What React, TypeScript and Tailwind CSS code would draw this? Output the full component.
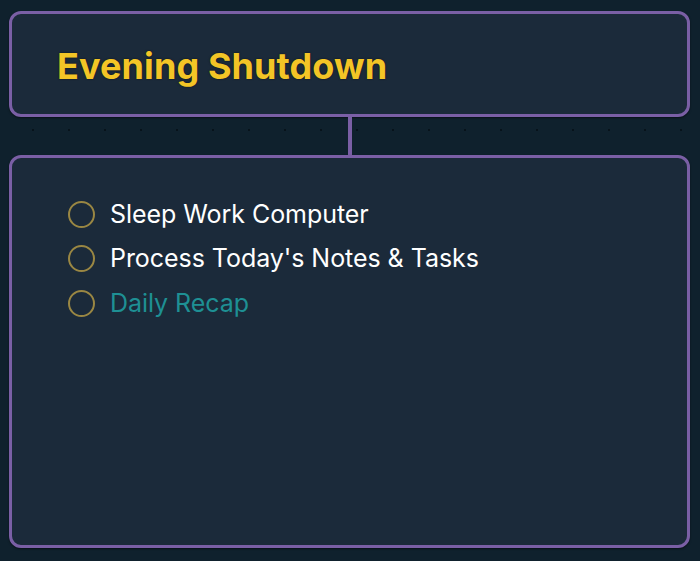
import React from "react";

const items = [
  { label: "Sleep Work Computer", color: "text-white" },
  { label: "Process Today's Notes & Tasks", color: "text-white" },
  { label: "Daily Recap", color: "text-[#1e9094]" },
];

export default function App() {
  return (
    <div
      className="w-[700px] h-[561px] bg-[#0f212d] bg-[radial-gradient(circle,#07131b_1px,transparent_1.5px)] bg-[length:36px_36px] bg-[position:15px_4px] pt-[11px] pl-[9px] pr-[10px] flex flex-col"
      style={{ fontFamily: "Inter, 'Noto Sans', sans-serif" }}
    >
      <div className="h-[106px] rounded-[12px] border-[3px] border-[#7a5fa5] bg-[#1b2a3a] flex items-center pl-[45px] pt-[3px] shadow-[0_1px_2px_rgba(0,0,0,0.5)]">
        <h1 className="text-[36px] font-bold text-[#f3c526] tracking-[0.1px] [text-shadow:0_0_2px_rgba(0,0,0,0.6)]">
          Evening Shutdown
        </h1>
      </div>
      <div className="flex justify-center">
        <div className="w-[4px] h-[38px] bg-[#7a5fa5] ml-[1px]" />
      </div>
      <div className="h-[393px] rounded-[12px] border-[3px] border-[#7a5fa5] bg-[#1b2a3a] pt-[34px] pl-[56px] shadow-[0_1px_2px_rgba(0,0,0,0.5)]">
        <ul className="flex flex-col">
          {items.map((it) => (
            <li key={it.label} className="h-[44.5px] flex items-center gap-[15px]">
              <span className="w-[27px] h-[27px] rounded-full border-2 border-[#9a8743] shrink-0" />
              <span className={`text-[25px] tracking-[-0.05px] ${it.color}`}>{it.label}</span>
            </li>
          ))}
        </ul>
      </div>
    </div>
  );
}
